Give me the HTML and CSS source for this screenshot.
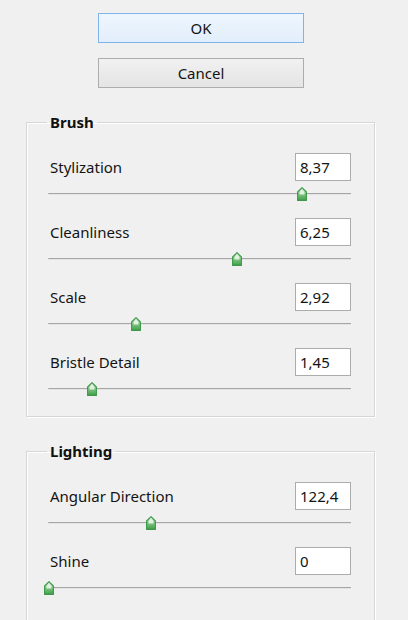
FILE: index.html
```html
<!DOCTYPE html>
<html>
<head>
<meta charset="utf-8">
<link rel="stylesheet" href="styles.css">
</head>
<body>
<div class="dialog">
  <div class="buttons">
    <button class="btn btn-default">OK</button>
    <button class="btn">Cancel</button>
  </div>

  <fieldset class="group">
    <legend class="group-title">Brush</legend>
    <div class="row">
      <div class="row-head"><span class="label">Stylization</span><input class="value" value="8,37"></div>
      <div class="track"><span class="thumb" style="left:83.7%"><svg width="10" height="14" viewBox="0 0 10 14"><use href="#thumb"/></svg></span></div>
    </div>
    <div class="row">
      <div class="row-head"><span class="label">Cleanliness</span><input class="value" value="6,25"></div>
      <div class="track"><span class="thumb" style="left:62.5%"><svg width="10" height="14" viewBox="0 0 10 14"><use href="#thumb"/></svg></span></div>
    </div>
    <div class="row">
      <div class="row-head"><span class="label">Scale</span><input class="value" value="2,92"></div>
      <div class="track"><span class="thumb" style="left:29.2%"><svg width="10" height="14" viewBox="0 0 10 14"><use href="#thumb"/></svg></span></div>
    </div>
    <div class="row">
      <div class="row-head"><span class="label">Bristle Detail</span><input class="value" value="1,45"></div>
      <div class="track"><span class="thumb" style="left:14.5%"><svg width="10" height="14" viewBox="0 0 10 14"><use href="#thumb"/></svg></span></div>
    </div>
  </fieldset>

  <fieldset class="group group-open">
    <legend class="group-title">Lighting</legend>
    <div class="row">
      <div class="row-head"><span class="label">Angular Direction</span><input class="value" value="122,4"></div>
      <div class="track"><span class="thumb" style="left:34%"><svg width="10" height="14" viewBox="0 0 10 14"><use href="#thumb"/></svg></span></div>
    </div>
    <div class="row">
      <div class="row-head"><span class="label">Shine</span><input class="value" value="0"></div>
      <div class="track"><span class="thumb" style="left:0.3%"><svg width="10" height="14" viewBox="0 0 10 14"><use href="#thumb"/></svg></span></div>
    </div>
  </fieldset>
</div>

<svg class="defs" width="0" height="0">
  <defs>
    <linearGradient id="tg" x1="0" y1="0" x2="0" y2="1">
      <stop offset="0" stop-color="#e4f2e4"/>
      <stop offset="0.45" stop-color="#86c886"/>
      <stop offset="1" stop-color="#3f9f4a"/>
    </linearGradient>
    <g id="thumb">
      <path d="M5 0.6 L9.4 5 V13.4 H0.6 V5 Z" fill="url(#tg)" stroke="#3c9848" stroke-width="1.1" stroke-linejoin="round"/>
      <path d="M5 2.6 L7.4 5 V7.5 H2.6 V5 Z" fill="#eef7ee" opacity="0.85"/>
    </g>
  </defs>
</svg>
</body>
</html>
```

FILE: styles.css
```css
html, body {
  margin: 0;
  padding: 0;
  background: #f0f0f0;
}
body {
  font-family: "Noto Sans", "Open Sans", sans-serif;
  font-size: 15px;
  color: #141414;
  overflow: hidden;
  height: 620px;
}
.dialog {
  width: 349px;
  padding: 13px 0 0 26px;
}
.buttons {
  display: flex;
  flex-direction: column;
  gap: 15px;
  width: 206px;
  margin-left: 72px;
}
.btn {
  box-sizing: border-box;
  height: 30px;
  width: 100%;
  padding: 0;
  font-family: inherit;
  font-size: 15px;
  color: #141414;
  border: 1px solid #adadad;
  background: linear-gradient(#f1f1f1, #e4e4e4);
}
.btn-default {
  border-color: #7eb4ea;
  background: linear-gradient(#eef6fd, #e2eefb);
}
.group {
  margin: 24px 0 0 0;
  padding: 21px 0 26px 0;
  border: 1px solid #d6d6d6;
  box-shadow: inset 1px 1px 0 #ffffff, 1px 1px 0 #ffffff;
  min-width: 0;
}
.group-open {
  padding-bottom: 80px;
}
.group-title {
  margin-left: 20px;
  padding: 0 3px;
  font-weight: bold;
  font-size: 15px;
  line-height: 20px;
  color: #111111;
}
.row {
  margin: 0 23px 23px 21px;
}
.row:last-child {
  margin-bottom: 0;
}
.row-head {
  display: flex;
  justify-content: space-between;
  align-items: center;
  height: 28px;
}
.label {
  padding-left: 2px;
}
.value {
  box-sizing: border-box;
  width: 56px;
  height: 28px;
  margin: 0;
  padding: 0 0 0 4px;
  border: 1px solid #acacac;
  background: #ffffff;
  font-family: inherit;
  font-size: 15px;
  color: #141414;
  outline: none;
}
.track {
  position: relative;
  height: 2px;
  margin-top: 12px;
  background: linear-gradient(#a6a6a6 0 1px, #e4e4e4 1px 2px);
  border-radius: 1px 0 0 1px;
}
.thumb {
  position: absolute;
  top: -6px;
  width: 10px;
  height: 14px;
  transform: translateX(-50%);
}
.thumb svg {
  display: block;
}
.defs {
  position: absolute;
  width: 0;
  height: 0;
}
```
